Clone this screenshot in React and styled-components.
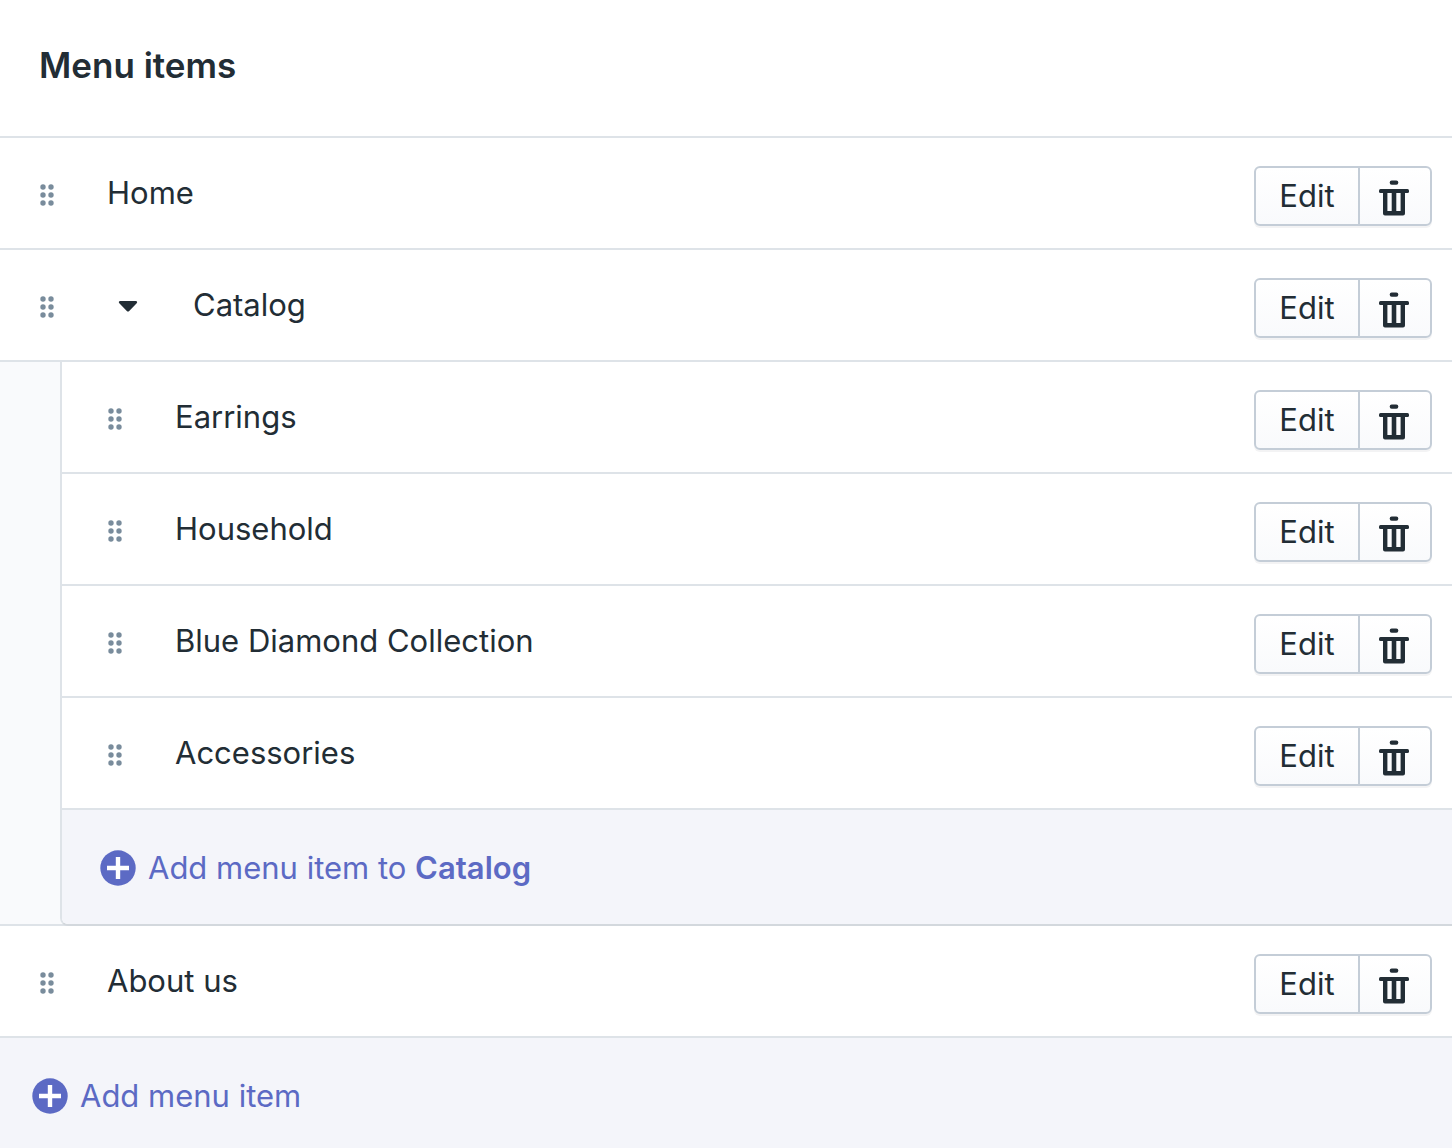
import React, { useState } from "react";
import styled, { createGlobalStyle } from "styled-components";

const colors = {
  ink: "#222d35",
  line: "#dee3e8",
  control: "#c4cdd7",
  handle: "#798c9c",
  indigo: "#5c6ac4",
  indigoTint: "#f4f5fa",
  gutter: "#f9fafc",
};

const GlobalStyle = createGlobalStyle`
  *, *::before, *::after { box-sizing: border-box; }
  body {
    margin: 0;
    background: #fff;
    color: ${colors.ink};
    font-family: Inter, "Liberation Sans", sans-serif;
    font-size: 31px;
    line-height: 40px;
  }
  button { font: inherit; color: inherit; cursor: pointer; }
`;

const Card = styled.section`
  background: #fff;
`;

const Header = styled.header`
  padding: 43px 39px 49px;
  border-bottom: 2px solid ${colors.line};
`;

const Title = styled.h2`
  margin: 0;
  font-size: 35px;
  line-height: 44px;
  font-weight: 600;
`;

const List = styled.ul`
  margin: 0;
  padding: 0;
  list-style: none;
`;

const NestedList = styled(List)`
  background: #fff;
  border-left: 2px solid ${colors.line};
  border-bottom: 2px solid #d3d8dd;
  border-bottom-left-radius: 8px;
  overflow: hidden;
`;

const Gutter = styled.div`
  padding-left: 60px;
  background: linear-gradient(${colors.line}, ${colors.line}) bottom / 100% 2px no-repeat ${colors.gutter};
`;

const Row = styled.div`
  display: flex;
  align-items: center;
  height: 112px;
  padding: 0 20px 0 ${(p) => (p.$nested ? 45 : 39)}px;
  border-bottom: 2px solid ${colors.line};
`;

const Handle = styled.button`
  display: flex;
  flex: none;
  margin: 4px 0 0;
  padding: 0;
  border: 0;
  background: none;
  cursor: grab;
`;

const Toggle = styled.button`
  display: flex;
  flex: none;
  margin-left: 60px;
  padding: 2px 0 0;
  border: 0;
  background: none;
`;

const Label = styled.span`
  flex: 1;
  min-width: 0;
  margin-left: 52px;
`;

const Actions = styled.div`
  display: flex;
  flex: none;
  height: 60px;
  margin-top: 6px;
  border: 2px solid ${colors.control};
  border-radius: 6px;
  background: linear-gradient(#fff, ${colors.gutter});
  box-shadow: 0 2px 0 rgba(22, 29, 37, 0.05);
`;

const EditButton = styled.button`
  width: 102px;
  padding: 0;
  border: 0;
  background: none;
`;

const DeleteButton = styled.button`
  display: flex;
  align-items: center;
  justify-content: center;
  width: 72px;
  padding: 4px 2px 0 0;
  border: 0;
  border-left: 2px solid ${colors.control};
  background: none;
`;

const AddButton = styled.button`
  display: flex;
  align-items: center;
  gap: 12px;
  width: 100%;
  padding: ${(p) => (p.$nested ? "38px 38px 36px" : "38px 32px 32px")};
  border: 0;
  background: ${colors.indigoTint};
  color: ${colors.indigo};
  text-align: left;

  strong { font-weight: 600; }
`;

function HandleIcon() {
  return (
    <svg width="16" height="24" viewBox="0 0 16 24" fill={colors.handle} aria-hidden="true">
      {[4, 12, 20].map((y) => (
        <React.Fragment key={y}>
          <circle cx="4" cy={y} r="2.7" />
          <circle cx="12" cy={y} r="2.7" />
        </React.Fragment>
      ))}
    </svg>
  );
}

function CaretIcon() {
  return (
    <svg width="26" height="20" viewBox="0 0 26 20" fill={colors.ink} aria-hidden="true">
      <path d="M5.2 5h15.6c1.3 0 1.8 1.5.9 2.3L14.2 15c-.7.7-1.700.7-2.400 0L4.300 7.300C3.400 6.500 3.900 5 5.200 5z" />
    </svg>
  );
}

function TrashIcon() {
  return (
    <svg width="30" height="36" viewBox="0 0 30 36" fill={colors.ink} aria-hidden="true">
      <rect x="10.7" y="0.5" width="8.6" height="4.2" rx="2" />
      <rect x="0" y="9" width="30" height="4" rx="1.5" />
      <path
        fillRule="evenodd"
        d="M4 11h22v22.5a2 2 0 0 1-2 2H6a2 2 0 0 1-2-2zM8.400 13v18h4.300V13zM17.300 13v18h4.300V13z"
      />
    </svg>
  );
}

function PlusIcon() {
  return (
    <svg width="36" height="36" viewBox="0 0 36 36" aria-hidden="true">
      <circle cx="18" cy="18" r="17.7" fill={colors.indigo} />
      <path d="M18 7v22M7 18h22" stroke="#fff" strokeWidth="4.4" />
    </svg>
  );
}

function MenuRow({ name, nested, open, onToggle }) {
  return (
    <Row $nested={nested}>
      <Handle type="button" aria-label={`Reorder ${name}`}>
        <HandleIcon />
      </Handle>
      {onToggle && (
        <Toggle type="button" aria-expanded={open} aria-label={`Toggle ${name}`} onClick={onToggle}>
          <CaretIcon />
        </Toggle>
      )}
      <Label>{name}</Label>
      <Actions>
        <EditButton type="button">Edit</EditButton>
        <DeleteButton type="button" aria-label={`Delete ${name}`}>
          <TrashIcon />
        </DeleteButton>
      </Actions>
    </Row>
  );
}

const catalogItems = ["Earrings", "Household", "Blue Diamond Collection", "Accessories"];

export default function App() {
  const [open, setOpen] = useState(true);

  return (
    <Card>
      <GlobalStyle />
      <Header>
        <Title>Menu items</Title>
      </Header>
      <List>
        <li>
          <MenuRow name="Home" />
        </li>
        <li>
          <MenuRow name="Catalog" open={open} onToggle={() => setOpen(!open)} />
          {open && (
            <Gutter>
              <NestedList>
                {catalogItems.map((name) => (
                  <li key={name}>
                    <MenuRow name={name} nested />
                  </li>
                ))}
                <li>
                  <AddButton type="button" $nested>
                    <PlusIcon />
                    <span>
                      Add menu item to <strong>Catalog</strong>
                    </span>
                  </AddButton>
                </li>
              </NestedList>
            </Gutter>
          )}
        </li>
        <li>
          <MenuRow name="About us" />
        </li>
      </List>
      <AddButton type="button">
        <PlusIcon />
        <span>Add menu item</span>
      </AddButton>
    </Card>
  );
}
